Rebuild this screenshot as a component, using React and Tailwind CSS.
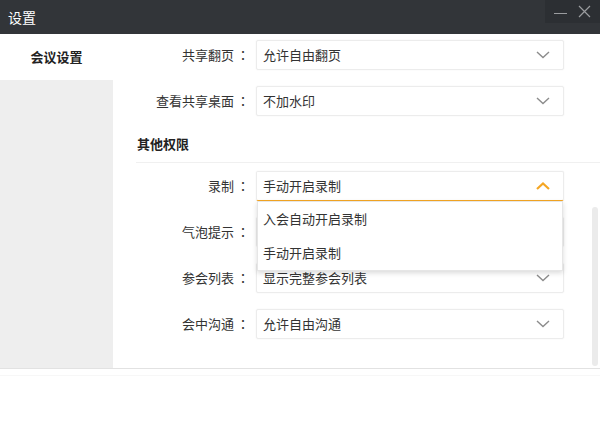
const font = { fontFamily: '"Microsoft YaHei", "Noto Sans CJK SC", "Noto Sans", sans-serif' }

function Chevron({ up }) {
  return (
    <svg width="14" height="8" viewBox="0 0 14 8" className={up ? 'text-[#f5a623]' : 'text-[#8c8c8c]'}>
      <path
        d={up ? 'M1 7 L7 1.5 L13 7' : 'M1 1 L7 6.5 L13 1'}
        fill="none"
        stroke="currentColor"
        strokeWidth={up ? 2.2 : 1.4}
      />
    </svg>
  )
}

function Select({ value, open }) {
  return (
    <div className={`w-[308px] h-[30px] flex items-center justify-between pl-[6px] pr-[13px] bg-white rounded-[2px] border shadow-[0_0_2px_rgba(0,0,0,0.06)] ${
      open ? 'border-[#ececec] border-b-[#f5a623]' : 'border-[#ececec]'
    }`}>
      <span className="text-[13px] text-[#333]">{value}</span>
      <Chevron up={open} />
    </div>
  )
}

function Row({ label, value, open, className = '' }) {
  return (
    <div className={`flex items-center ${className}`}>
      <div className="w-[121px] text-right text-[13px] text-[#333]">{label}</div>
      <span className="w-[14px] ml-[2px] text-center text-[13px] text-[#333]" style={{ fontFamily: '"Noto Sans CJK JP", sans-serif' }}>：</span>
      <div className="ml-[6px]">
        <Select value={value} open={open} />
      </div>
    </div>
  )
}

export default function App() {
  return (
    <div className="w-[600px] h-[425px] bg-white overflow-hidden flex flex-col" style={font}>
      {/* title bar */}
      <div className="h-[34px] bg-[#323539] flex items-start justify-between shrink-0">
        <div className="h-[34px] flex items-center pl-[8px] text-[14px] text-white">设置</div>
        <div className="w-[55px] h-[23px] bg-[#2c2f33] flex items-center justify-around px-[4px]">
          <div className="w-[13px] h-px bg-[#9a9c9f] mt-[4px]" />
          <svg width="13" height="13" viewBox="0 0 13 13" className="text-[#9a9c9f]">
            <path d="M1 1 L12 12 M12 1 L1 12" stroke="currentColor" strokeWidth="1.2" />
          </svg>
        </div>
      </div>

      <div className="flex h-[334px] shrink-0">
        {/* sidebar */}
        <div className="w-[113px] flex flex-col">
          <div className="h-[46px] bg-white flex items-center justify-center text-[13px] font-bold text-[#222]">会议设置</div>
          <div className="flex-1 bg-[#eeeeee]" />
        </div>

        {/* main */}
        <div className="flex-1 relative pt-[6px]">
          <Row label="共享翻页" value="允许自由翻页" />
          <Row label="查看共享桌面" value="不加水印" className="mt-[16px]" />

          <div className="mt-[18px] h-[20px] flex items-center pl-[24px] text-[13px] font-bold text-[#222]">其他权限</div>
          <div className="mt-[8px] ml-[23px] h-px bg-[#f0f0f0]" />

          <div className="relative mt-[8px]">
            <Row label="录制" value="手动开启录制" open />
            {/* dropdown */}
            <div className="absolute left-[144px] top-[30px] z-10 w-[306px] bg-white border border-[#e6e6e6] shadow-[0_2px_5px_rgba(0,0,0,0.15)]">
              <div className="h-[34px] flex items-center pl-[5px] text-[13px] text-[#333]">入会自动开启录制</div>
              <div className="h-[34px] flex items-center pl-[5px] text-[13px] text-[#333]">手动开启录制</div>
            </div>
          </div>
          {/* value hidden behind the open dropdown */}
          <Row label="气泡提示" value="" className="mt-[16px]" />
          <Row label="参会列表" value="显示完整参会列表" className="mt-[16px]" />
          <Row label="会中沟通" value="允许自由沟通" className="mt-[16px]" />

          {/* scrollbar */}
          <div className="absolute right-[2px] top-[173px] w-[6px] h-[159px] bg-[#ebebeb] rounded-[3px]" />
        </div>
      </div>

      {/* bottom bar */}
      <div className="flex-1 border-t border-[#e2e2e2]">
        <div className="mt-[6px] h-px bg-[#f7f7f7]" />
      </div>
    </div>
  )
}
